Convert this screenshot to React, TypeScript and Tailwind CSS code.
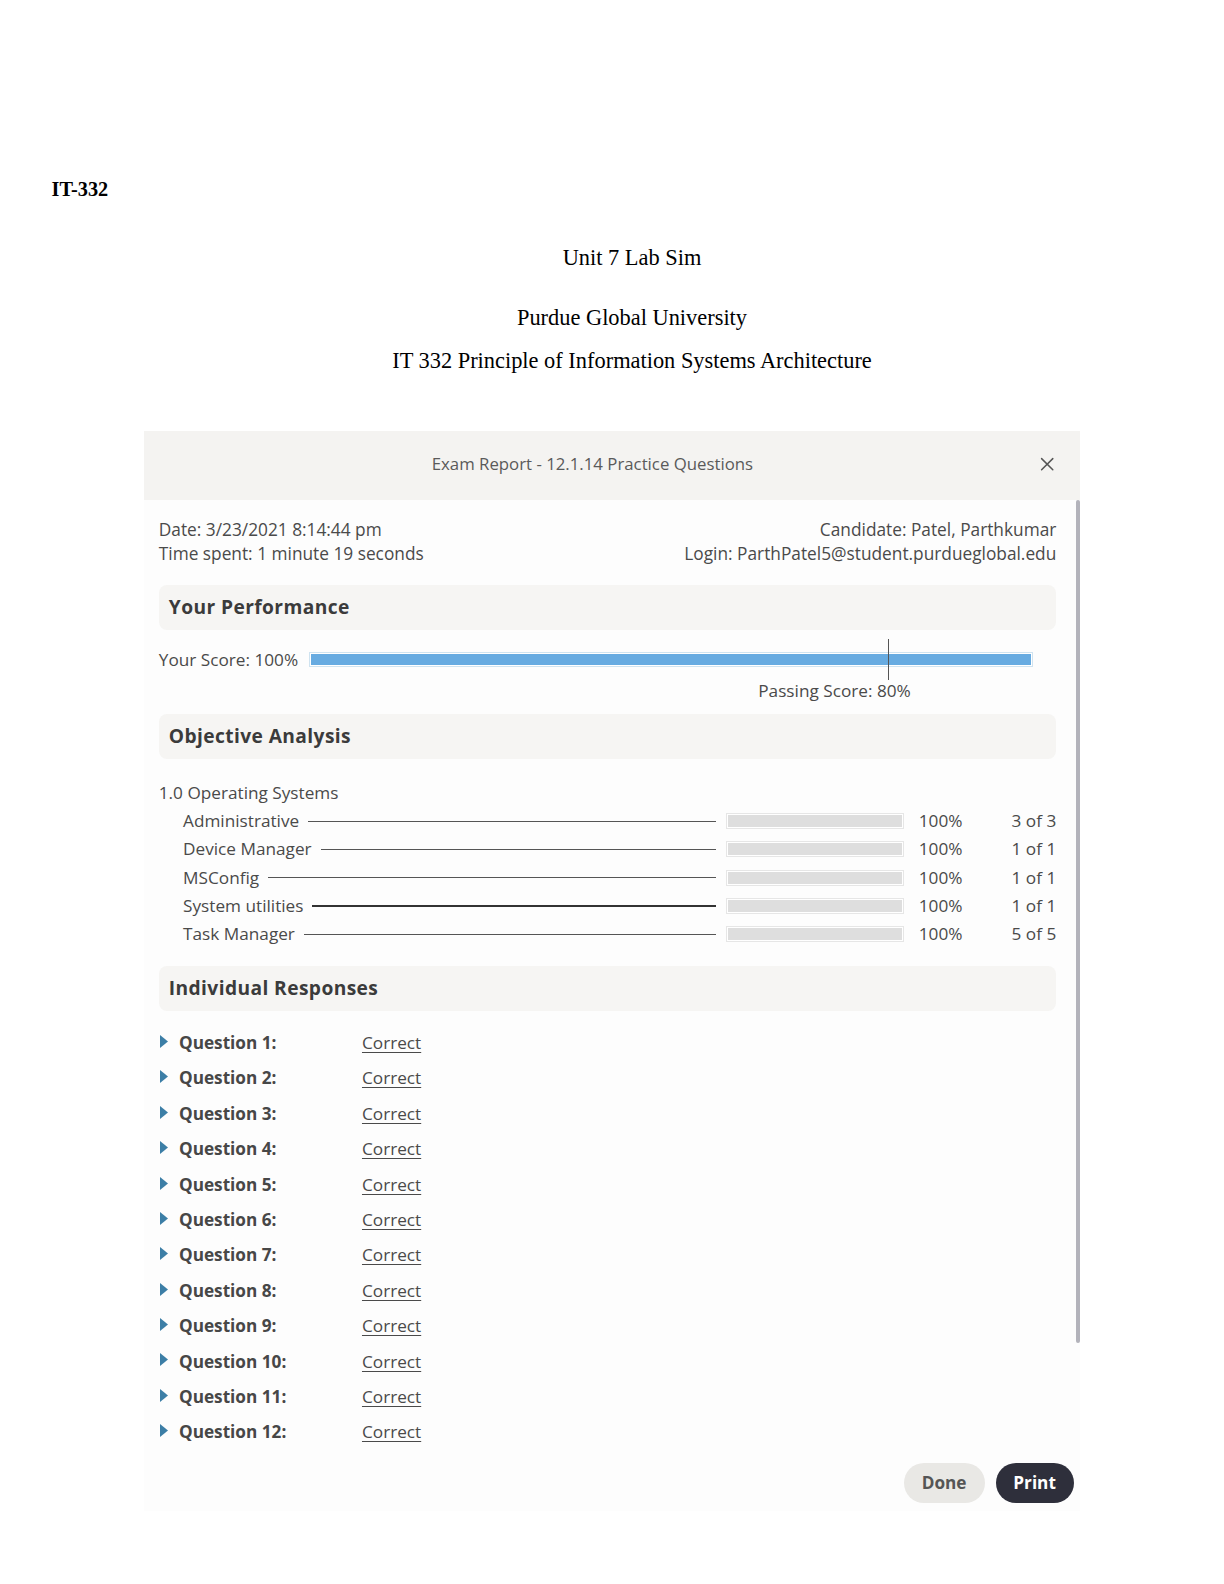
import { X } from "lucide-react";

const objectives = [
  { name: "Administrative", count: "3 of 3", thick: false },
  { name: "Device Manager", count: "1 of 1", thick: false },
  { name: "MSConfig", count: "1 of 1", thick: false },
  { name: "System utilities", count: "1 of 1", thick: true },
  { name: "Task Manager", count: "5 of 5", thick: false },
];

const questions = Array.from({ length: 12 }, (_, i) => i + 1);

function SectionBox({ title }: { title: string }) {
  return (
    <div className="flex h-[45.5px] items-center rounded-lg bg-[#f6f5f3] px-[10px]">
      <h2 className="text-[19.2px] font-bold tracking-[0.4px] text-[#3b3b3b]">{title}</h2>
    </div>
  );
}

export default function App() {
  return (
    <div className="h-[1584px] overflow-hidden bg-white pt-[177px]">
      {/* Document heading */}
      <div className="font-['Liberation_Serif',serif] text-black">
        <p className="pl-[51.5px] text-[20.3px] font-bold leading-[24.3px]">IT-332</p>
        <div className="pl-[40px] text-center text-[22.4px] leading-[24.3px]">
          <p className="mt-[44.5px]">Unit 7 Lab Sim</p>
          <p className="mt-[36.4px]">Purdue Global University</p>
          <p className="mt-[18.2px]">IT 332 Principle of Information Systems Architecture</p>
        </div>
      </div>

      {/* Exam report panel */}
      <div className="ml-[143.6px] mt-[57.6px] w-[936px] bg-[#fdfdfd] font-['Open_Sans',sans-serif] text-[#4a4a4a]">
        <div className="relative flex h-[68.8px] items-center bg-[#f4f3f1] pb-[3px] pr-[38.4px]">
          <p className="flex-1 text-center text-[16.8px] text-[#5a5a5a]">
            Exam Report - 12.1.14 Practice Questions
          </p>
          <X className="absolute right-[21px] top-[22px] h-[22.4px] w-[22.4px] text-[#555]" strokeWidth={1.6} />
        </div>

        <div className="relative pl-[15.2px] pr-[23.3px] pt-[18.2px]">
          {/* scrollbar */}
          <div className="absolute right-0 top-0 h-[843px] w-[4px] rounded-sm bg-[#b3b3bb]" />

          <div className="flex justify-between text-[17.3px] leading-[24.3px]">
            <div>
              <p>Date: 3/23/2021 8:14:44 pm</p>
              <p>Time spent: 1 minute 19 seconds</p>
            </div>
            <div className="text-right">
              <p>Candidate: Patel, Parthkumar</p>
              <p>Login: ParthPatel5@student.purdueglobal.edu</p>
            </div>
          </div>

          <div className="mt-[18.2px]">
            <SectionBox title="Your Performance" />
          </div>

          <div className="relative mt-[9.1px] flex h-[40.4px] items-center">
            <span className="text-[17.2px]">Your Score: 100%</span>
            <div className="ml-[11px] w-[724px] border border-[#cfe3f0] bg-white p-px">
              <div className="h-[11.2px] bg-[#67abe1]" />
            </div>
            <div className="absolute left-[729px] top-0 h-[40.4px] w-px bg-[#555]" />
          </div>
          <p className="pl-[599.5px] text-[17.2px] leading-[22.2px]">Passing Score: 80%</p>

          <div className="mt-[12.1px]">
            <SectionBox title="Objective Analysis" />
          </div>

          <p className="mt-[19.2px] text-[17.2px] leading-[28.3px]">1.0 Operating Systems</p>
          {objectives.map((o) => (
            <div key={o.name} className="flex h-[28.3px] items-center pl-[24.3px] text-[17.2px]">
              <span>{o.name}</span>
              <div className={`ml-[9px] mr-[10px] flex-1 ${o.thick ? "h-[2px] bg-[#333]" : "h-px bg-[#555]"}`} />
              <div className="w-[178px] border border-[#e6e6e6] bg-white p-px">
                <div className="h-[12.2px] bg-[#dedede]" />
              </div>
              <div className="flex w-[152.7px] justify-between pl-[15.2px]">
                <span>100%</span>
                <span>{o.count}</span>
              </div>
            </div>
          ))}

          <div className="mt-[17.2px]">
            <SectionBox title="Individual Responses" />
          </div>

          <div className="mt-[14.2px]">
            {questions.map((q) => (
              <div key={q} className="flex h-[35.4px] items-center">
                <div className="flex w-[20.2px] pl-px">
                  <svg width="8" height="13" viewBox="0 0 8 13" className="-mt-[3px]">
                    <polygon points="0,0 8,6.5 0,13" fill="#3c7ea6" />
                  </svg>
                </div>
                <span className="w-[183px] text-[17.2px] font-bold text-[#474747]">Question {q}:</span>
                <span className="text-[17.2px] text-[#4a4a4a] underline underline-offset-[3px]">Correct</span>
              </div>
            ))}
          </div>
        </div>

        <div className="flex justify-end gap-[11px] pb-[8px] pr-[6px] pt-[13.1px]">
          <button className="h-[40.4px] w-[81px] rounded-full bg-[#e9e8e5] text-[17.2px] font-bold text-[#555]">
            Done
          </button>
          <button className="h-[40.4px] w-[78px] rounded-full bg-[#2e2f3b] text-[17.2px] font-bold text-white">
            Print
          </button>
        </div>
      </div>
    </div>
  );
}
